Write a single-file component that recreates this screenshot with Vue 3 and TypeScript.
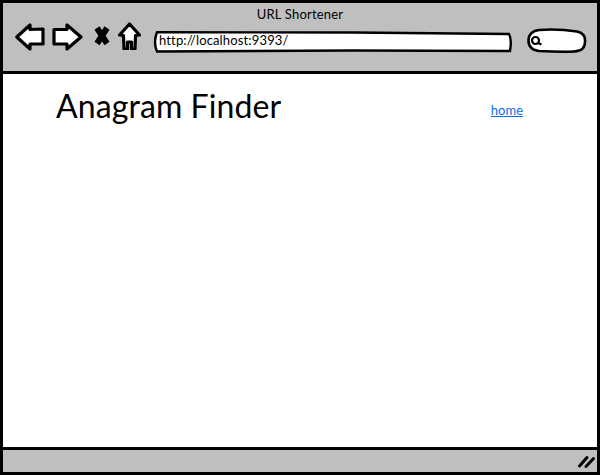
<template>
  <div class="window">
    <header class="toolbar">
      <div class="title">{{ title }}</div>
      <div class="nav">
        <svg class="icon back" width="30" height="28" viewBox="0 0 30 28">
          <path d="M1.800 14 L15 2 L15 6.500 L28 6 L28 21 L15 21 L15 26 Z" />
        </svg>
        <svg class="icon forward" width="31" height="28" viewBox="0 0 31 28">
          <path d="M29 14 L15 2 L15 6.500 L2 6.500 L2 21 L15 21 L15 26 Z" />
        </svg>
        <svg class="icon stop" width="16" height="21" viewBox="0 0 16 21">
          <path d="M3 3 L13 18.500 M13 3 L3 18.500" />
        </svg>
        <svg class="icon home" width="23" height="28" viewBox="0 0 23 28">
          <path d="M11.500 2 L21.500 13 L17.500 13.500 L17 27 L13.500 27 L13.500 20 L9.500 20 L9.500 27 L6 27 L5.500 13.500 L1.500 13 Z" />
        </svg>
        <div class="url">
          <svg class="url-shape" width="360" height="22" viewBox="0 0 360 22">
            <path d="M4 1.200 L200 1.500 L356 3 Q359 8 357 20 L200 19.500 L4 20.500 Q0 11 4 1.200 Z" />
          </svg>
          <span class="url-text">{{ url }}</span>
        </div>
        <svg class="search" width="60" height="25" viewBox="0 0 60 25">
          <path class="search-box" d="M12 2 C25 1 40 2 50 3.500 C57 5 58.500 9 58 14 C58 20 55 23 47 23.500 C35 24 22 23.500 12 23 C4 22 1.500 17 1.500 12.500 C1.500 7 5 3 12 2 Z" />
          <circle class="search-lens" cx="8.500" cy="12.500" r="3.500" />
          <path class="search-lens" d="M11 15 L14.500 16.500" />
        </svg>
      </div>
    </header>

    <main class="page">
      <h1>Anagram Finder</h1>
      <a class="link" href="#">home</a>
    </main>

    <footer class="status">
      <svg class="grip" width="17" height="13" viewBox="0 0 17 13">
        <path d="M1.500 11 L9 2.500 M8 11.500 L15.500 3.500" />
      </svg>
    </footer>
  </div>
</template>

<script setup lang="ts">
const title = 'URL Shortener'
const url = 'http://localhost:9393/'
</script>

<style>
html,
body {
  margin: 0;
  background: #fff;
}
</style>

<style scoped>
.window {
  box-sizing: border-box;
  width: 600px;
  height: 475px;
  display: flex;
  flex-direction: column;
  border: 3px solid #000;
  background: #fff;
  font-family: Lato, "Open Sans", sans-serif;
  color: #000;
  overflow: hidden;
}

.toolbar {
  box-sizing: border-box;
  height: 71px;
  flex: none;
  background: #bfbfbf;
  border-bottom: 3px solid #000;
}

.title {
  height: 19px;
  padding-top: 3px;
  box-sizing: border-box;
  text-align: center;
  font-size: 13px;
  line-height: 16px;
  letter-spacing: 0.2px;
}

.nav {
  display: flex;
  align-items: flex-start;
  height: 32px;
  padding-left: 12px;
}

.icon {
  flex: none;
}

.icon path {
  fill: #fff;
  stroke: #000;
  stroke-width: 3.200;
  stroke-linejoin: round;
}

.back,
.forward {
  margin-top: 1px;
}

.forward {
  margin-left: 7px;
}

.stop {
  margin-left: 11px;
  margin-top: 3px;
}

.stop path {
  fill: none;
  stroke-width: 6;
}

.home {
  margin-left: 8px;
}

.url {
  position: relative;
  flex: none;
  width: 360px;
  height: 22px;
  margin-left: 12px;
  margin-top: 9px;
}

.url-shape {
  display: block;
}

.url-shape path {
  fill: #fff;
  stroke: #000;
  stroke-width: 2.400;
}

.url-text {
  position: absolute;
  left: 6px;
  top: 1px;
  font-size: 13px;
  line-height: 17px;
  letter-spacing: 0.15px;
}

.search {
  flex: none;
  margin-left: 14px;
  margin-top: 6px;
}

.search-box {
  fill: #fff;
  stroke: #000;
  stroke-width: 2.600;
}

.search-lens {
  fill: none;
  stroke: #000;
  stroke-width: 2.200;
}

.page {
  flex: 1;
  display: flex;
  align-items: flex-start;
  justify-content: space-between;
  padding: 12px 74px 0 53px;
}

h1 {
  margin: 0;
  font-size: 32px;
  line-height: 40px;
  font-weight: 400;
  letter-spacing: 0.1px;
}

.link {
  margin-top: 15px;
  font-size: 13px;
  line-height: 18px;
  color: #0a6cf5;
  text-decoration: underline;
}

.status {
  box-sizing: border-box;
  height: 25px;
  flex: none;
  display: flex;
  align-items: center;
  justify-content: flex-end;
  padding: 0 2px 0 0;
  background: #bfbfbf;
  border-top: 3px solid #000;
}

.grip path {
  fill: none;
  stroke: #000;
  stroke-width: 3;
  stroke-linecap: round;
}
</style>
